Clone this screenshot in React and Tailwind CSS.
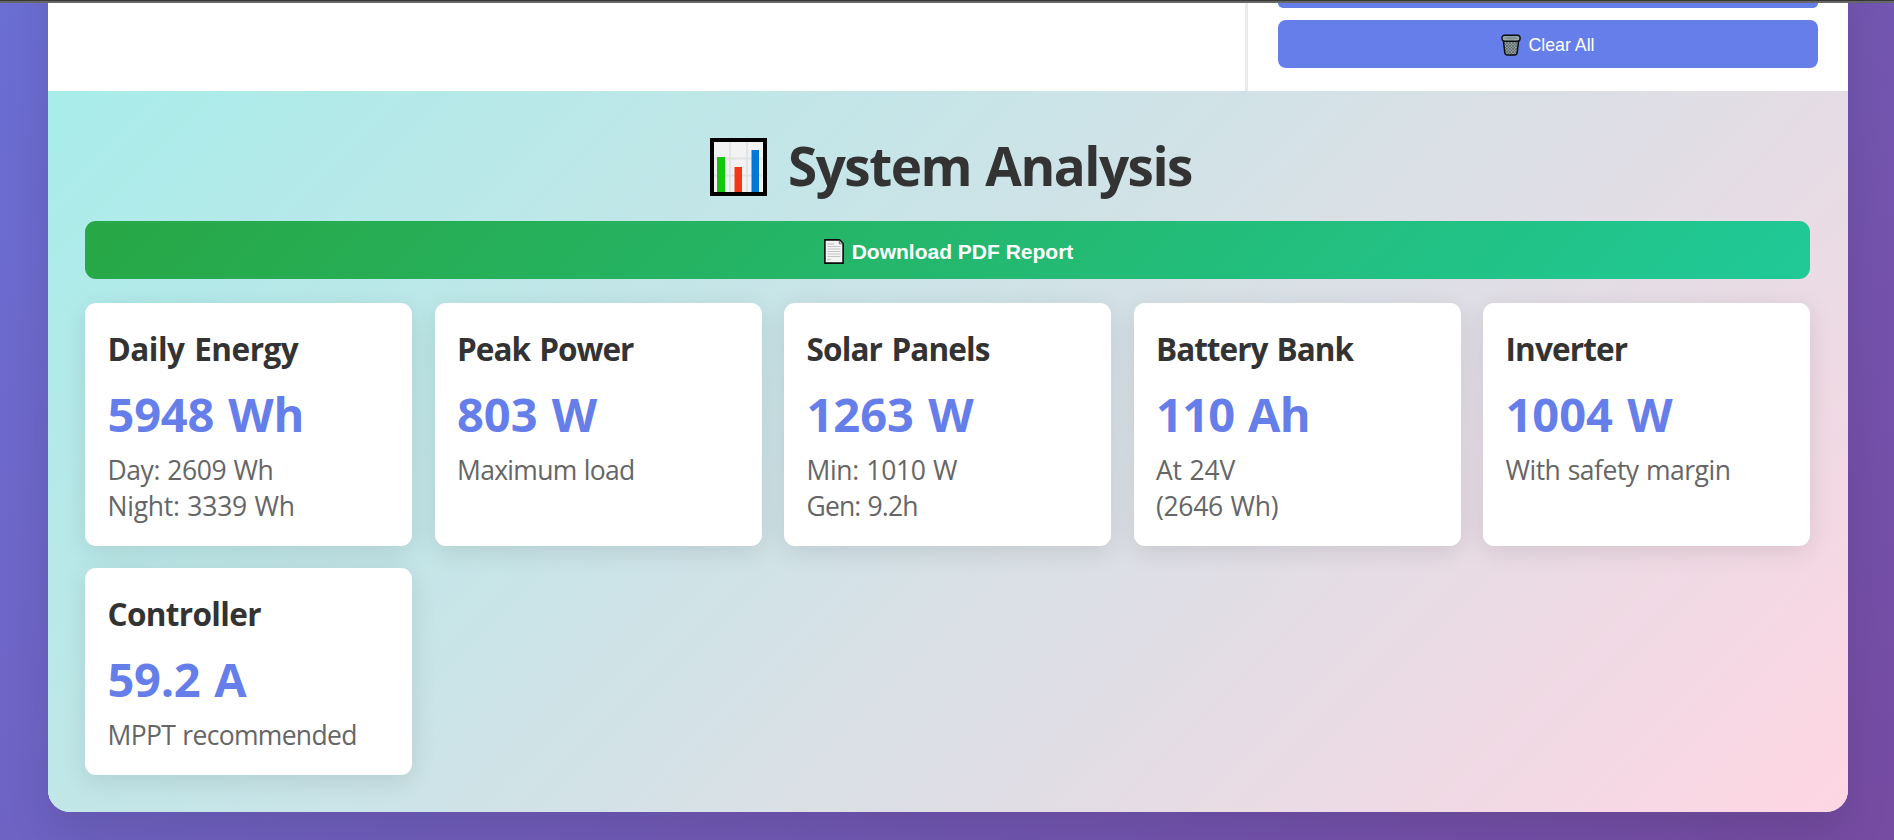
import React from "react";

const cards = [
  { title: "Daily Energy", titleCls: "tracking-[-0.5px]", value: "5948 Wh", valueCls: "tracking-[-0.2px]", lines: [["Day: 2609 Wh", "tracking-[-0.45px]"], ["Night: 3339 Wh", "tracking-[-0.25px]"]] },
  { title: "Peak Power", titleCls: "tracking-[-1px]", value: "803 W", valueCls: "tracking-[0px]", lines: [["Maximum load", "tracking-[-0.7px]"]] },
  { title: "Solar Panels", titleCls: "tracking-[-0.85px]", value: "1263 W", valueCls: "tracking-[0px]", lines: [["Min: 1010 W", "tracking-[-0.35px]"], ["Gen: 9.2h", "tracking-[-0.85px]"]] },
  { title: "Battery Bank", titleCls: "tracking-[-1px]", value: "110 Ah", valueCls: "tracking-[-0.7px]", lines: [["At 24V", "tracking-[-0.2px]"], ["(2646 Wh)", "tracking-[-0.3px]"]] },
  { title: "Inverter", titleCls: "tracking-[-0.85px]", value: "1004 W", valueCls: "tracking-[0px]", lines: [["With safety margin", "tracking-[-0.5px]"]] },
  { title: "Controller", titleCls: "tracking-[-0.65px]", value: "59.2 A", valueCls: "tracking-[-0.3px]", lines: [["MPPT recommended", "tracking-[-0.68px]"]] },
];

function TrashIcon() {
  return (
    <svg width="20" height="22" viewBox="0 0 20 22" className="shrink-0">
      <defs>
        <pattern id="mesh" width="3" height="3" patternUnits="userSpaceOnUse">
          <rect width="3" height="3" fill="#8f9c9e" />
          <path d="M0 0L3 3M3 0L0 3" stroke="#4c5759" strokeWidth="0.6" />
        </pattern>
      </defs>
      <path d="M2.200 5L3.800 18.500Q4.100 21 6.500 21H13.500Q15.900 21 16.200 18.500L17.800 5Z" fill="url(#mesh)" stroke="#0b0d0e" strokeWidth="1.500" strokeLinejoin="round" />
      <rect x="0.900" y="1.200" width="18.200" height="6" rx="2.800" fill="#9aa9ab" stroke="#0b0d0e" strokeWidth="1.400" />
      <ellipse cx="10" cy="4" rx="6.800" ry="1.500" fill="#849193" />
    </svg>
  );
}

function ChartIcon() {
  return (
    <svg width="57" height="58" viewBox="0 0 57 58" className="shrink-0">
      <rect width="57" height="58" fill="#000" />
      <rect x="4" y="4" width="49" height="50" fill="#f2f2f2" />
      <path d="M20 4V54M37 4V54M4 20.500H53M4 37.500H53" stroke="#e2e2e2" strokeWidth="1.800" />
      <rect x="7" y="19" width="8" height="35" fill="#16c60c" />
      <rect x="24.500" y="29" width="7.500" height="25" fill="#f03a17" />
      <rect x="41.500" y="12" width="7.500" height="42" fill="#0078d7" />
    </svg>
  );
}

function PageIcon() {
  return (
    <svg width="20" height="25" viewBox="0 0 20 25" className="shrink-0">
      <path d="M0.900 0.900H15.500L19.100 4.500V24.100H0.900Z" fill="#f4f4f4" stroke="#0a0a0a" strokeWidth="1.600" />
      <path d="M15.300 1.500V4.800H18.500" fill="#d8d8d8" stroke="#444" strokeWidth="0.700" />
      <path d="M3.500 4.800H10M3.500 7.500H16.500M3.500 10H16.500M3.500 12.500H16.500M3.500 15H16.500M3.500 17.500H16.500M3.500 20.300H6.500" stroke="#c4c4c4" strokeWidth="1.200" />
    </svg>
  );
}

function Card({ title, titleCls, value, valueCls, lines }) {
  return (
    <div className="rounded-[11px] bg-white px-[22.5px] pt-[24px] pb-[22.5px] shadow-[0_6px_26px_rgba(0,0,0,0.1)]">
      <h3 className={"mb-[12px] text-[31.5px] leading-[43px] font-bold text-[#333] [word-spacing:2px] " + titleCls}>{title}</h3>
      <div className={"mb-[5.5px] pt-px text-[47px] leading-[63px] font-bold text-[#667eea] [word-spacing:2px] " + valueCls}>{value}</div>
      {lines.map(([text, cls]) => (
        <div key={text} className={"text-[26.5px] leading-[36px] text-[#666] [word-spacing:1px] " + cls}>{text}</div>
      ))}
    </div>
  );
}

export default function App() {
  return (
    <div className="flex h-[840px] w-[1894px] flex-col overflow-hidden font-['Open_Sans','Noto_Sans',sans-serif] whitespace-nowrap">
      <div className="h-[3px] shrink-0 border-t border-[#373737] bg-[#666]" />
      <div className="h-[837px] overflow-hidden bg-[linear-gradient(135deg,#667eea_0%,#764ba2_100%)] bg-[length:100%_2100px] bg-bottom pr-[46px] pl-[48px]">
        <div className="-mt-[100px] w-[1800px] overflow-hidden rounded-[22px] bg-white pt-[100px] shadow-[0_22px_45px_rgba(0,0,0,0.11)]">
          <div className="flex h-[88px]">
            <div className="flex-1" />
            <div className="w-[603px] border-l-[3px] border-[#e9ecef] px-[30px]">
              <div className="h-[5px] rounded-b-[7px] bg-[#667eea]" />
              <button className="mt-[12px] flex h-[48px] w-full items-center justify-center gap-[7px] rounded-[8px] bg-[#667eea] pt-[2px] font-['Liberation_Sans',Arial,sans-serif] text-[17.75px] leading-none text-white">
                <TrashIcon />
                <span className="pt-[2px]">Clear All</span>
              </button>
            </div>
          </div>
          <div className="h-[721px] bg-[linear-gradient(135deg,#a8edea_0%,#fed6e3_100%)] pt-[37px] pr-[38px] pl-[37px]">
            <h2 className="mb-[18px] flex h-[75px] items-center justify-center gap-[21px] pl-[7px] text-[53px] leading-[75px] font-bold tracking-[-1.5px] text-[#333] [word-spacing:2px]">
              <span className="pt-[3px]"><ChartIcon /></span>
              <span>System Analysis</span>
            </h2>
            <button className="flex h-[58px] w-full items-center justify-center gap-[8px] rounded-[11px] bg-[linear-gradient(135deg,#28a745_0%,#20c997_100%)] pt-[2px] pl-[2px] font-['Liberation_Sans',Arial,sans-serif] text-[21px] leading-none font-bold text-white">
              <PageIcon />
              <span className="pt-px">Download PDF Report</span>
            </button>
            <div className="mt-[24px] grid grid-cols-5 gap-x-[22.5px] gap-y-[22px]">
              {cards.map((c) => <Card key={c.title} {...c} />)}
            </div>
          </div>
        </div>
      </div>
    </div>
  );
}
